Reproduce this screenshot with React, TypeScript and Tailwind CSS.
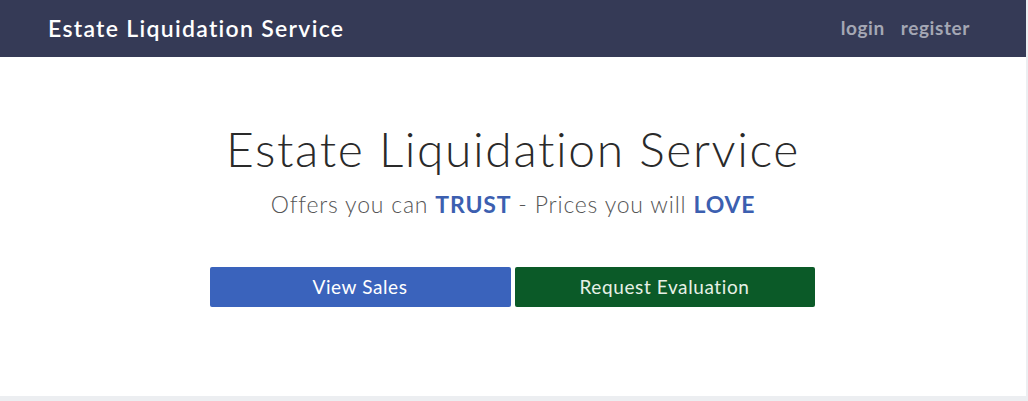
import React from "react";

export default function App() {
  return (
    <div className="w-[1028px] h-[401px] bg-[#eceef1] flex flex-col overflow-hidden" style={{ fontFamily: "Lato, 'Open Sans', sans-serif" }}>
      <div className="w-[1026px] flex flex-col h-[396px] bg-white">
        <nav className="h-[57px] bg-[#353a56] flex items-center justify-between px-[48px] shrink-0">
          <span className="text-white text-[23px] font-semibold tracking-[1.3px]">Estate Liquidation Service</span>
          <div className="flex items-center gap-[16px] pr-[8px] text-[19px] font-bold text-[#a4a7b4] tracking-[0.6px]">
            <span>login</span>
            <span>register</span>
          </div>
        </nav>
        <main className="flex-1 flex flex-col items-center pt-[60px]">
          <h1 className="text-[48px] font-light text-[#2a2a2a] leading-[64px] tracking-[1.6px]">Estate Liquidation Service</h1>
          <p className="text-[23px] font-light text-[#555] leading-[30px] mt-[8px] tracking-[0.8px]">
            Offers you can <span className="font-bold text-[#3c5fb0]">TRUST</span> - Prices you will <span className="font-bold text-[#3c5fb0]">LOVE</span>
          </p>
          <div className="flex gap-[4px] mt-[48px] ml-[-2px]">
            <button className="w-[301px] h-[40px] bg-[#3a63bc] text-white text-[19px] tracking-[0.6px] rounded-[2px]">View Sales</button>
            <button className="w-[300px] h-[40px] bg-[#0b5a28] text-[#e6f1e6] text-[19px] tracking-[0.6px] rounded-[2px]">Request Evaluation</button>
          </div>
        </main>
      </div>
    </div>
  );
}
